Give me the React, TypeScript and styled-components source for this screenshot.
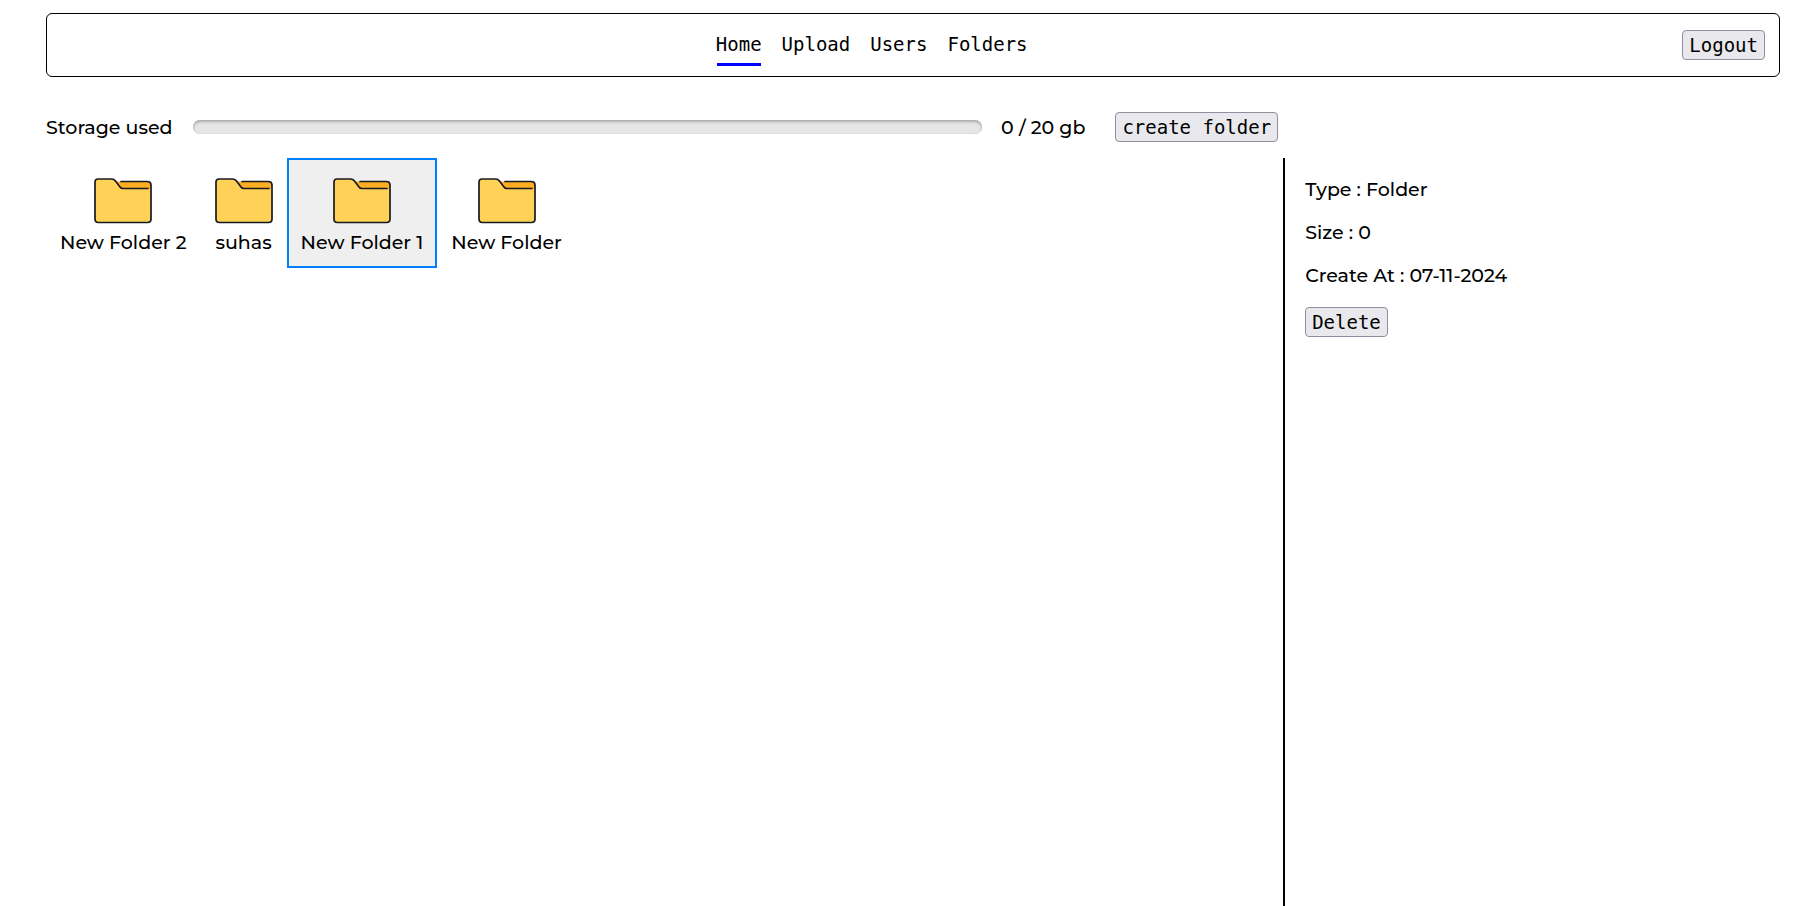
import { useState } from "react";
import styled, { createGlobalStyle } from "styled-components";

const GlobalStyle = createGlobalStyle`
  *, *::before, *::after { box-sizing: border-box; }
  body {
    margin: 0;
    background: #fff;
    color: #000;
    font: 500 19px/24px Montserrat, Inter, sans-serif;
  }
`;

const mono = `"DejaVu Sans Mono", monospace`;

const Page = styled.div`
  min-height: 100vh;
  display: flex;
  flex-direction: column;
  padding: 13px 17px 0 46px;
`;

const Header = styled.header`
  display: flex;
  align-items: center;
  height: 64px;
  padding: 0 14px;
  border: 1px solid #000;
  border-radius: 6px;
`;

const Nav = styled.nav`
  flex: 1;
  display: flex;
  justify-content: center;
  gap: 20px;
`;

const NavLink = styled.a<{ $active?: boolean }>`
  padding: 9px 0 11px;
  font: 400 19px/22px ${mono};
  color: #000;
  text-decoration: none;
  background: ${(p) => (p.$active ? "linear-gradient(#00f, #00f) center bottom / calc(100% - 2px) 3px no-repeat" : "none")};
`;

const Button = styled.button`
  height: 30px;
  padding: 0 6px;
  border: 1px solid #8f8f9d;
  border-radius: 4px;
  background: #e9e9ed;
  color: #000;
  font: 400 19px/22px ${mono};
  white-space: nowrap;
`;

const Columns = styled.main`
  flex: 1;
  display: grid;
  grid-template-columns: 249fr 100fr;
  grid-template-rows: auto 1fr;
  margin-top: 35px;
`;

const StorageRow = styled.div`
  display: flex;
  align-items: center;
  height: 30px;
  padding-right: 5px;
  margin-bottom: 16px;
`;

const StorageLabel = styled.label`
  padding-top: 2px;
  margin-right: 20px;
  white-space: nowrap;
`;

const StorageMeter = styled.meter`
  appearance: none;
  flex: 1;
  min-width: 0;
  height: 14px;
  border: 0;
  border-radius: 7px;
  background: #e6e6e6;
  box-shadow: inset 0 2px 3px rgba(0, 0, 0, 0.25), inset 0 0 1px rgba(0, 0, 0, 0.2);

  &::-webkit-meter-inner-element { display: none; }
`;

const StorageValue = styled.span`
  padding-top: 2px;
  margin: 0 30px 0 19px;
  white-space: nowrap;
`;

const FolderList = styled.div`
  grid-row: 2;
  display: flex;
  flex-wrap: wrap;
  align-items: flex-start;
  align-content: flex-start;
`;

const FolderItem = styled.button`
  display: flex;
  flex-direction: column;
  align-items: center;
  height: 110px;
  padding: 10px 12px 0;
  border: 2px solid transparent;
  background: transparent;
  color: #000;
  font: inherit;
  white-space: nowrap;

  &[aria-pressed="true"] {
    border-color: #0080ff;
    background: #efefef;
  }
`;

const FolderSvg = styled.svg`
  display: block;
  width: 58px;
  height: 60px;
  margin-bottom: 1px;
`;

const Details = styled.aside`
  grid-row: 2;
  grid-column: 2;
  padding: 20px;
  border-left: 2px solid #000;
`;

const DetailLine = styled.p`
  margin: 0 0 19px;
`;

const links = ["Home", "Upload", "Users", "Folders"];
const folders = ["New Folder 2", "suhas", "New Folder 1", "New Folder"];

function FolderIcon() {
  return (
    <FolderSvg viewBox="0 0 58 60" aria-hidden="true">
      <path d="M21 11.5H54Q57 11.5 57 15V24H27Z" fill="#ffae22" />
      <path
        d="M1 12Q1 9 4 9H17.5Q20 9 21.5 11L26 17Q27 18.5 29 18.5H57V49Q57 52.5 53.5 52.5H4.5Q1 52.5 1 49Z"
        fill="#ffd257"
      />
      <path
        d="M27 11.5H53Q57 11.5 57 15V49Q57 52.5 53.5 52.5H4.5Q1 52.5 1 49V12Q1 9 4 9H17.5Q20 9 21.5 11L26 17Q27 18.5 29 18.5H54"
        fill="none"
        stroke="#171a22"
        strokeWidth="1.7"
        strokeLinecap="round"
        strokeLinejoin="round"
      />
    </FolderSvg>
  );
}

export default function App() {
  const [selected, setSelected] = useState("New Folder 1");
  return (
    <>
      <GlobalStyle />
      <Page>
        <Header>
          <Nav>
            {links.map((name) => (
              <NavLink key={name} href={`#${name.toLowerCase()}`} $active={name === "Home"}>
                {name}
              </NavLink>
            ))}
          </Nav>
          <Button type="button">Logout</Button>
        </Header>
        <Columns>
          <StorageRow>
            <StorageLabel htmlFor="storage">Storage used</StorageLabel>
            <StorageMeter id="storage" min={0} max={20} value={0} />
            <StorageValue>0 / 20 gb</StorageValue>
            <Button type="button">create folder</Button>
          </StorageRow>
          <FolderList>
            {folders.map((name) => (
              <FolderItem
                key={name}
                type="button"
                aria-pressed={name === selected}
                onClick={() => setSelected(name)}
              >
                <FolderIcon />
                {name}
              </FolderItem>
            ))}
          </FolderList>
          <Details>
            <DetailLine>Type : Folder</DetailLine>
            <DetailLine>Size : 0</DetailLine>
            <DetailLine>Create At : 07-11-2024</DetailLine>
            <Button type="button">Delete</Button>
          </Details>
        </Columns>
      </Page>
    </>
  );
}
